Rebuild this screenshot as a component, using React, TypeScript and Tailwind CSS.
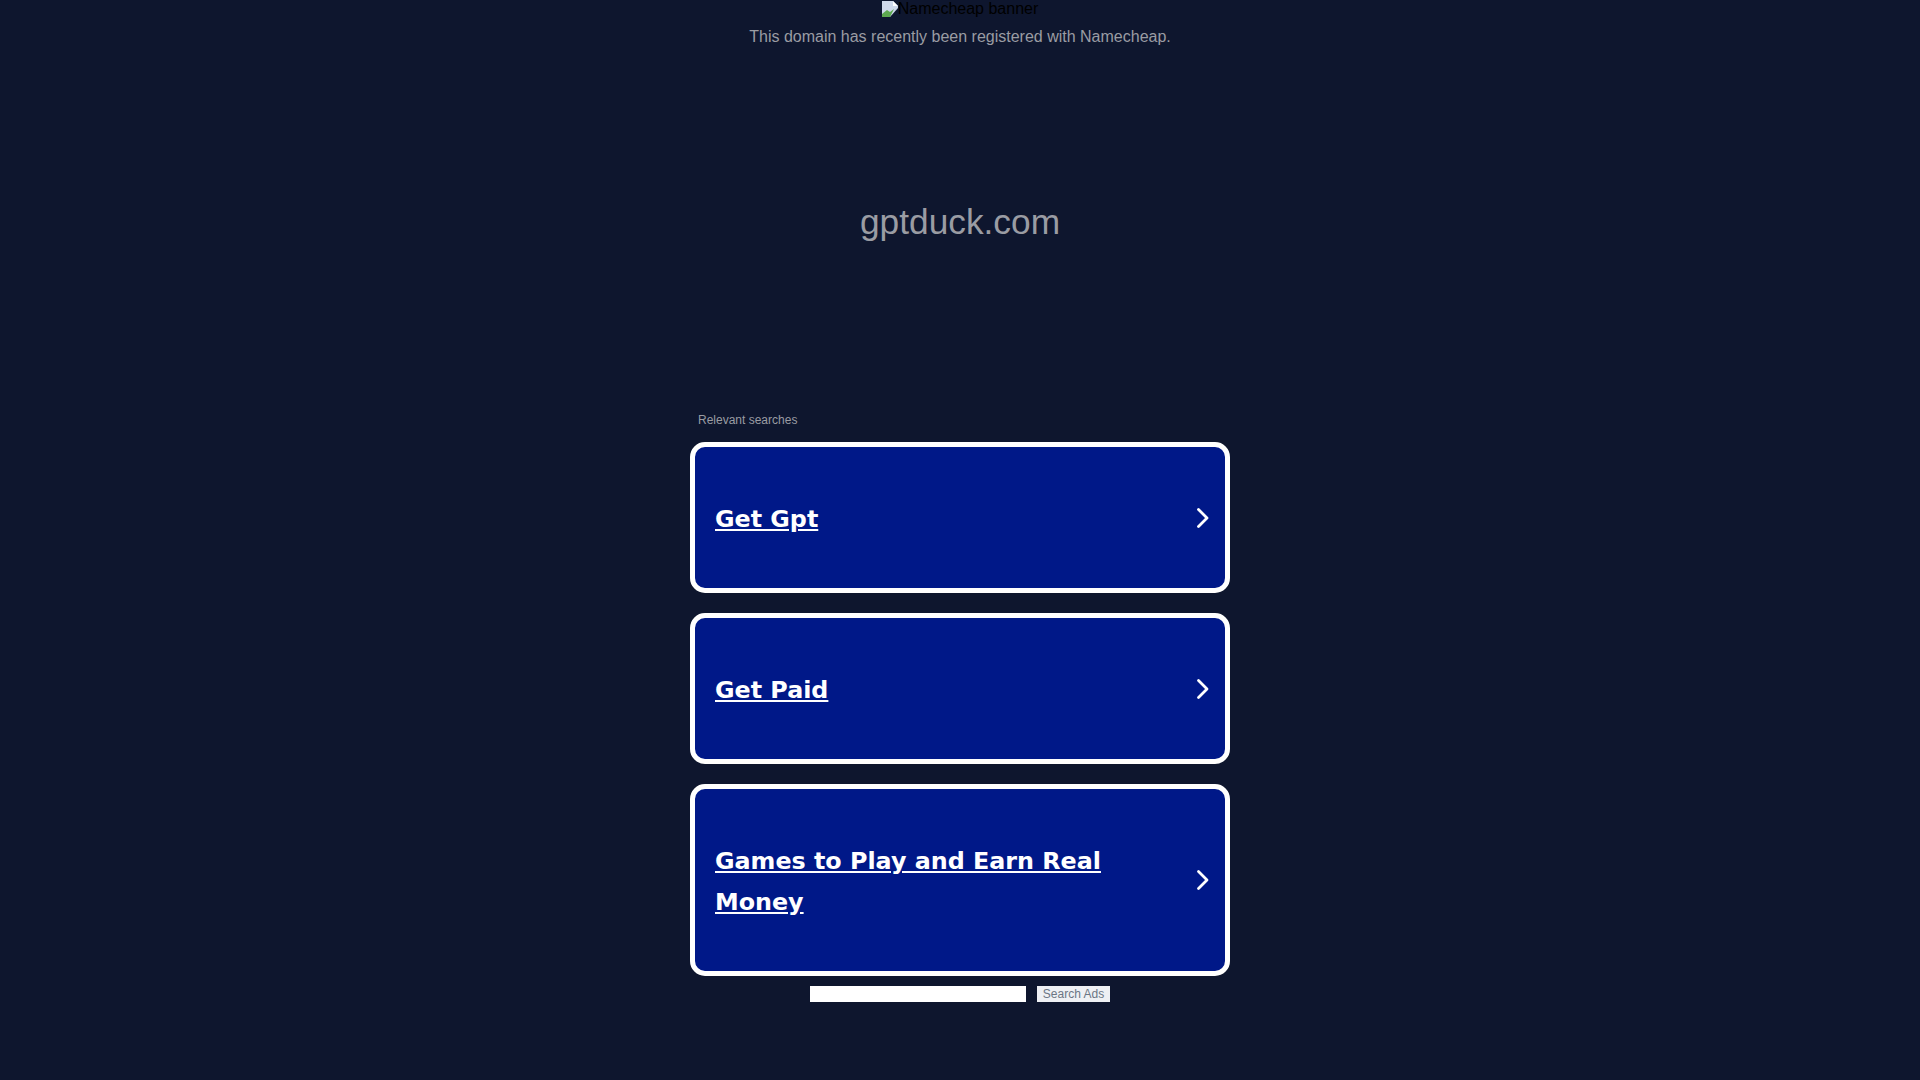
const searches = ["Get Gpt", "Get Paid", "Games to Play and Earn Real Money"];

function BrokenImage() {
  return (
    <svg width="16" height="16" viewBox="0 0 16 16" className="shrink-0">
      <path d="M0 0H11L16 5V7L8 16H0Z" fill="#cfd9ea" />
      <path d="M0 16V13L5 9L8 11L12 8L8 16Z" fill="#5da84f" />
      <path d="M11 0L16 5H11Z" fill="#ffffff" />
    </svg>
  );
}

function Chevron() {
  return (
    <svg width="14" height="22" viewBox="0 0 14 22" fill="none" className="shrink-0">
      <path d="M2.5 2.5L11 11L2.5 19.5" stroke="#ffffff" strokeWidth="2.8" strokeLinecap="round" strokeLinejoin="round" />
    </svg>
  );
}

function ResultCard({ title }: { title: string }) {
  return (
    <a
      href="#"
      className="flex items-center rounded-[15px] border-[5px] border-white bg-[#001888] pl-[20px] pr-[15px] text-white"
    >
      <span className="flex-1 pt-[52px] pb-[48px] pr-[61px] font-['DejaVu_Sans',sans-serif] text-[23.8px] leading-[41px] font-bold underline">
        {title}
      </span>
      <Chevron />
    </a>
  );
}

export default function App() {
  return (
    <div className="min-h-[1080px] bg-[#0e162e] font-['Liberation_Sans',sans-serif]">
      <div className="flex flex-col items-center">
        <div className="flex h-[17px] items-center text-[16px] text-black">
          <BrokenImage />
          <span>Namecheap banner</span>
        </div>
        <p className="mt-[11px] text-[16px] leading-[18px] text-[#9a9ca3]">
          This domain has recently been registered with Namecheap.
        </p>
        <h1 className="mt-[156px] text-[35.3px] leading-[40px] text-[#9a9ca3]">gptduck.com</h1>
      </div>
      <div className="mx-auto mt-[171px] w-[540px]">
        <p className="pl-[8px] text-[12px] leading-[14px] text-[#9a9ca3]">Relevant searches</p>
        <div className="mt-[15px] flex flex-col gap-[20px]">
          {searches.map((s) => (
            <ResultCard key={s} title={s} />
          ))}
        </div>
        <form className="mt-[10px] flex justify-center gap-[11px]">
          <input className="h-[16px] w-[216px] bg-white" />
          <button type="button" className="h-[16px] w-[73px] bg-[#eef0f4] text-[12px] leading-[16px] text-[#6b7684]">
            Search Ads
          </button>
        </form>
      </div>
    </div>
  );
}
